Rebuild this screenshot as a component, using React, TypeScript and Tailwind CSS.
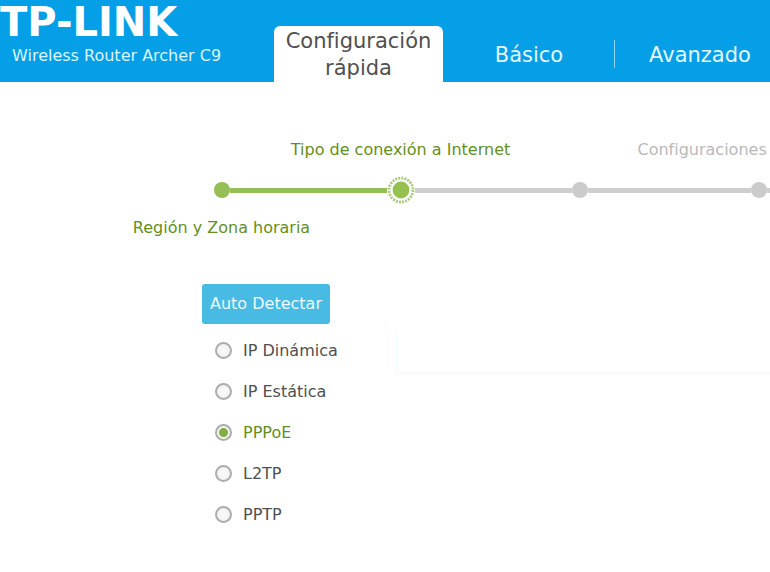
import { useState } from "react";
import clsx from "clsx";

type Step = { label: string; side: "above" | "below"; state: "done" | "current" | "todo" };

const tabs = ["Básico", "Avanzado"];

const steps: Step[] = [
  { label: "Región y Zona horaria", side: "below", state: "done" },
  { label: "Tipo de conexión a Internet", side: "above", state: "current" },
  { label: "", side: "below", state: "todo" },
  { label: "Configuraciones", side: "above", state: "todo" },
];

const connectionTypes = ["IP Dinámica", "IP Estática", "PPPoE", "L2TP", "PPTP"];

function Header() {
  return (
    <header className="flex h-[82px] bg-[#049fe6] text-white">
      <div className="w-[274px] shrink-0">
        <a href="#" className="block text-[40px] leading-[44px] font-bold">TP-LINK</a>
        <p className="pl-3 text-base leading-6 text-[#d9f6ff]">Wireless Router Archer C9</p>
      </div>
      <nav className="flex shrink-0 items-end text-[21px] leading-[27px]">
        <a
          href="#"
          className="flex h-14 w-[169px] items-center justify-center rounded-t-md bg-white pt-0.5 text-center text-[#505050]"
        >
          Configuración rápida
        </a>
        {tabs.map((tab, i) => (
          <div key={tab} className="flex h-14 w-[171px] items-center">
            <span className={clsx("h-7 w-px", i > 0 && "bg-[#8fd6f6]")} />
            <a href="#" className="flex-1 pt-0.5 text-center text-[#e2f8ff]">{tab}</a>
          </div>
        ))}
      </nav>
    </header>
  );
}

function StepDot({ state }: { state: Step["state"] }) {
  if (state === "current") {
    return (
      <svg className="size-7 shrink-0" viewBox="0 0 28 28">
        <circle cx="14" cy="14" r="14" fill="#fff" />
        <circle cx="14" cy="14" r="12" fill="none" stroke="#a9cb7c" strokeWidth="2.8" strokeDasharray="2 1.14" />
        <circle cx="14" cy="14" r="8.4" fill="#95c153" />
      </svg>
    );
  }
  return <span className={clsx("size-4 shrink-0 rounded-full", state === "done" ? "bg-[#95bf55]" : "bg-[#cbcbcc]")} />;
}

function Stepper() {
  return (
    <ol className="flex overflow-hidden pl-[132px]">
      {steps.map((step, i) => {
        const label = (
          <span
            className={clsx(
              "flex h-6 items-center text-base whitespace-nowrap",
              i === steps.length - 1 && "w-[242px]",
              step.state === "todo" ? "text-[#b9b9b9]" : "text-[#648f20]"
            )}
          >
            {step.label}
          </span>
        );
        return (
          <li key={i} className="flex w-[179px] shrink-0 flex-col items-center">
            <div className="flex h-6 justify-center">{step.side === "above" && label}</div>
            <div className="mt-3.5 mb-3 flex h-7 w-full items-center">
              <span
                className={clsx("h-[5px] flex-1", i > 0 && (step.state === "todo" ? "bg-[#cecece]" : "bg-[#95bf55]"))}
              />
              <StepDot state={step.state} />
              <span className={clsx("h-[5px] flex-1", step.state === "done" ? "bg-[#95bf55]" : "bg-[#cecece]")} />
            </div>
            <div className="flex h-6 justify-center">{step.side === "below" && label}</div>
          </li>
        );
      })}
    </ol>
  );
}

export default function App() {
  const [selected, setSelected] = useState("PPPoE");

  return (
    <div className="min-h-screen overflow-hidden bg-white font-['Verdana','DejaVu_Sans',sans-serif] [font-variant-ligatures:none]">
      <Header />
      <main className="pt-14">
        <Stepper />

        <form className="mt-11 pl-[202px]">
          <button type="button" className="block h-10 rounded-[3px] bg-[#48bbe5] px-2 text-base text-[#eefaff]">
            Auto Detectar
          </button>
          <div className="flex pt-1.5">
            <div className="w-[194px] shrink-0 pl-[13px]">
              {connectionTypes.map((type) => (
                <label
                  key={type}
                  className="flex h-[41px] items-center gap-[11px] text-base text-[#4f4f4f] has-checked:text-[#648f20]"
                >
                  <input
                    type="radio"
                    name="connection"
                    value={type}
                    checked={selected === type}
                    onChange={() => setSelected(type)}
                    className="size-[17px] appearance-none rounded-full border-2 border-[#adadad] bg-[radial-gradient(circle,#f8f8f8_30%,#ececec)] checked:bg-[radial-gradient(circle,#7fb041_4px,#f6f6f6_5px)]"
                  />
                  {type}
                </label>
              ))}
            </div>
            <div className="h-11 flex-1 border-b border-l border-b-[#f9f9f9] border-l-[#effcff]" />
          </div>
        </form>
      </main>
    </div>
  );
}
